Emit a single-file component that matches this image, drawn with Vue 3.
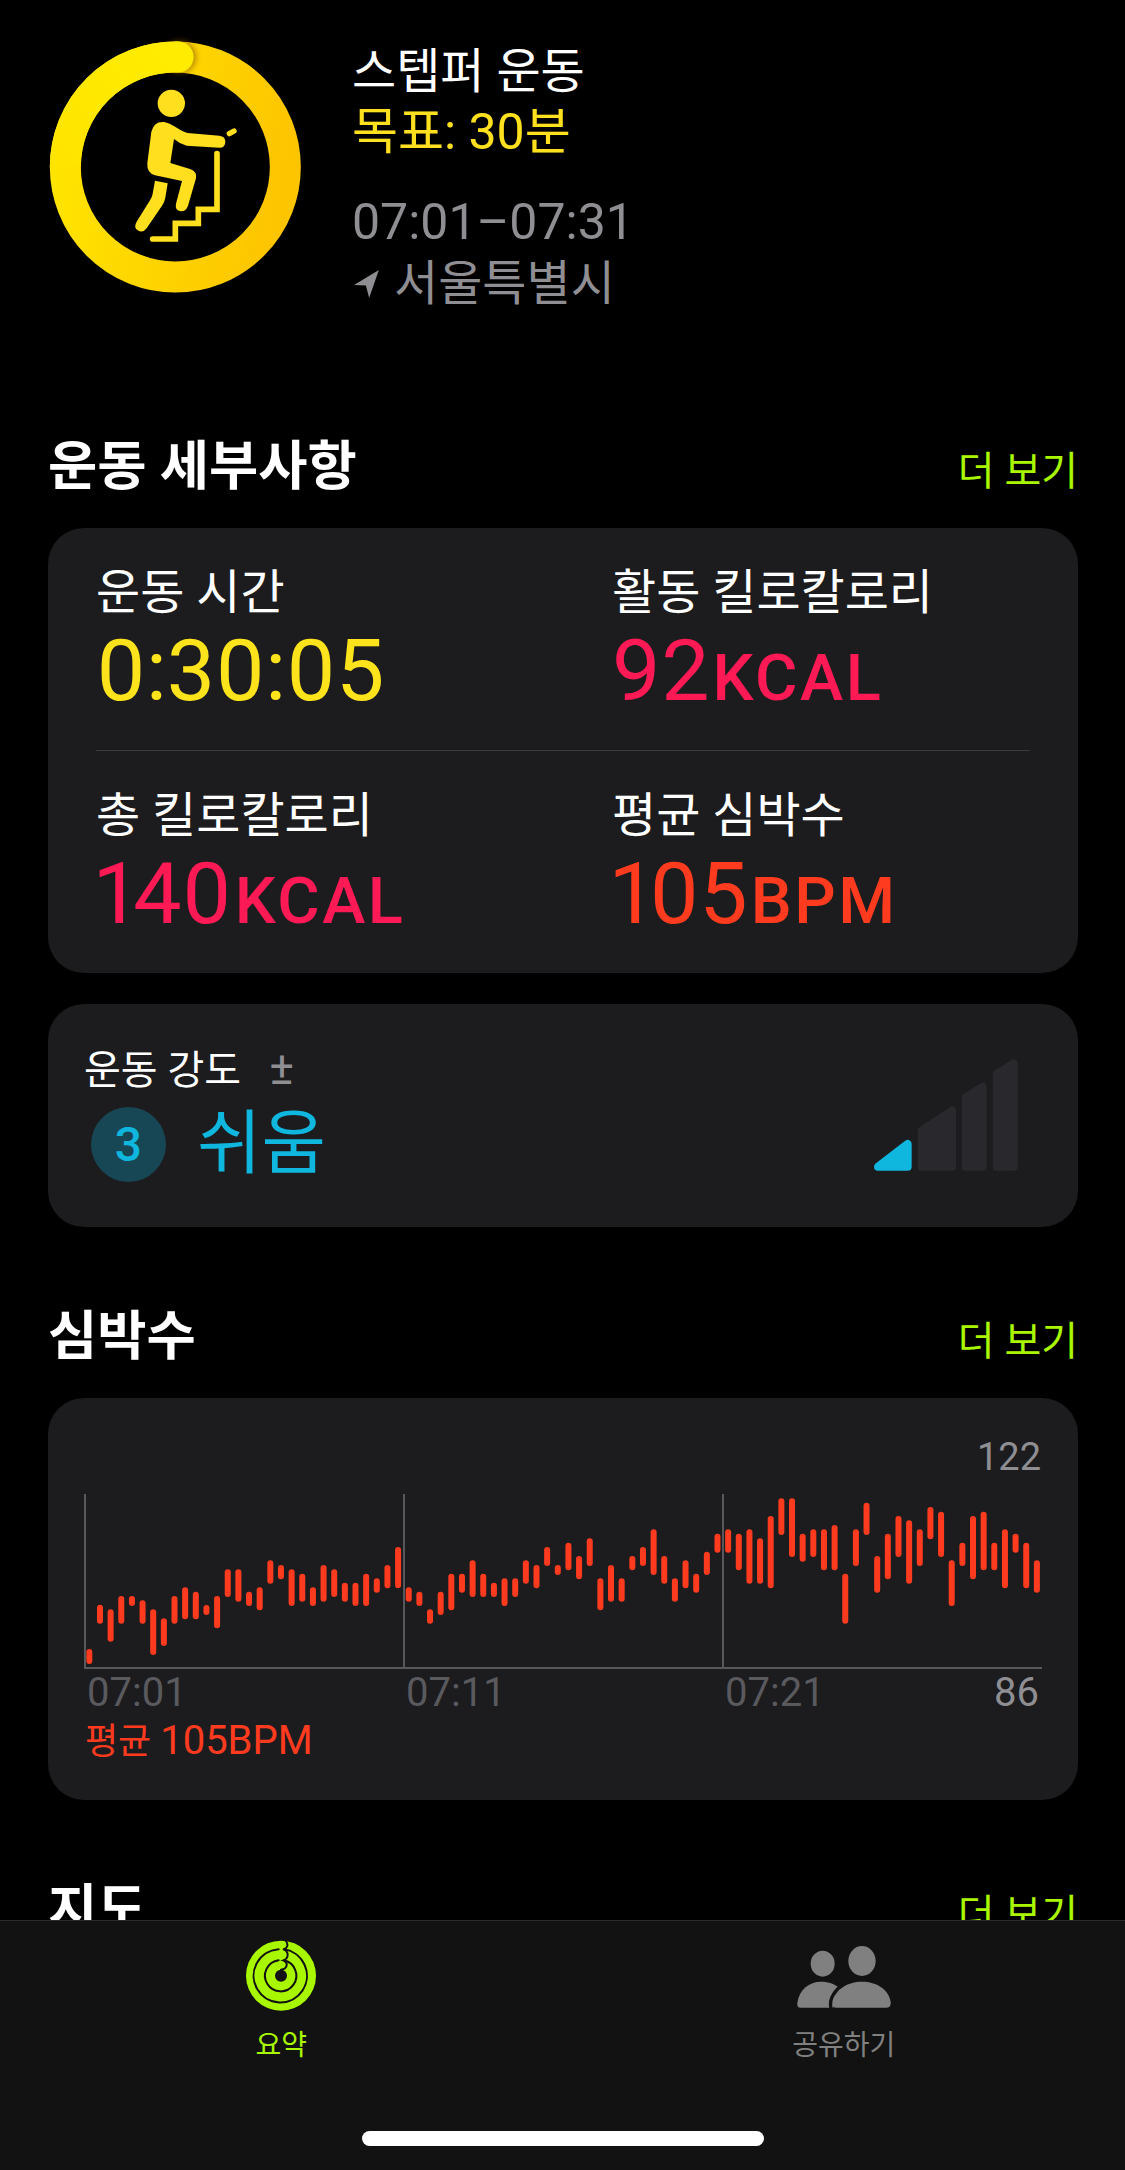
<template>
  <div class="page">
    <!-- workout header -->
    <header class="header">
      <svg class="ring" width="270" height="265" viewBox="0 0 810 795">
        <defs>
          <linearGradient id="ringBase" x1="0" y1="0.3" x2="1" y2="0.5">
            <stop offset="0" stop-color="#ffe400" />
            <stop offset="1" stop-color="#fdc500" />
          </linearGradient>
          <linearGradient id="ringCap" x1="0" y1="1" x2="1" y2="0">
            <stop offset="0" stop-color="#ffe400" />
            <stop offset="1" stop-color="#ffec00" />
          </linearGradient>
          <filter id="capShadow" x="-60%" y="-60%" width="220%" height="220%">
            <feDropShadow dx="6" dy="0" stdDeviation="9" flood-color="#8a5a00" flood-opacity="0.75" />
          </filter>
        </defs>
        <circle cx="406" cy="396" r="330" fill="none" stroke="url(#ringBase)" stroke-width="93" />
        <circle cx="414" cy="66" r="46.500" fill="#ffec00" filter="url(#capShadow)" />
        <path d="M76 396 A330 330 0 0 1 414 66" fill="none" stroke="url(#ringCap)" stroke-width="93" />
        <g fill="#ffdf1e">
          <circle cx="394" cy="205" r="41" />
          <path d="M372 261 C395 265 415 285 442 294 L538 302 Q556 304 556 320 Q556 338 538 338 L440 332 Q418 326 402 312 L391 384 L450 402 Q472 410 468 430 L444 512 Q438 530 422 529 Q404 526 408 506 L426 438 L345 421 Q320 414 322 385 L334 290 Q342 258 372 261 Z" />
          <path d="M345 437 L383 445 L376 488 Q374 500 366 512 L320 580 Q308 596 293 586 Q280 576 290 560 L330 496 Q336 488 338 476 Z" />
        </g>
        <path d="M568 296 L582 288" stroke="#ffdf1e" stroke-width="16" stroke-linecap="round" fill="none" />
        <path d="M531 356 V523 H475 V565 H406 V612 H338" stroke="#ffdf1e" stroke-width="17" stroke-linecap="round" fill="none" />
      </svg>
      <div class="info">
        <div class="line title">스텝퍼 운동</div>
        <div class="line goal">목표: 30분</div>
        <div class="line time">07:01–07:31</div>
        <div class="line place">
          <svg width="26" height="28" viewBox="0 0 24 26"><path d="M23 0 L0 14 L11 14.500 L14 26 Z" fill="#8e8e93" /></svg>
          <span>서울특별시</span>
        </div>
      </div>
    </header>

    <!-- workout details -->
    <section class="section first">
      <div class="sec-head">
        <h2>운동 세부사항</h2>
        <span class="more">더 보기</span>
      </div>
      <div class="card stats">
        <div class="stat-row">
          <div class="stat">
            <div class="label">운동 시간</div>
            <div class="value yellow">0:30:05</div>
          </div>
          <div class="stat">
            <div class="label">활동 킬로칼로리</div>
            <div class="value pink">92<small>KCAL</small></div>
          </div>
        </div>
        <div class="divider"></div>
        <div class="stat-row">
          <div class="stat">
            <div class="label">총 킬로칼로리</div>
            <div class="value pink">140<small>KCAL</small></div>
          </div>
          <div class="stat">
            <div class="label">평균 심박수</div>
            <div class="value red">105<small>BPM</small></div>
          </div>
        </div>
      </div>

      <div class="card effort">
        <div class="effort-left">
          <div class="effort-label">운동 강도<span class="plusminus">±</span></div>
          <div class="effort-row">
            <div class="badge">3</div>
            <div class="effort-text">쉬움</div>
          </div>
        </div>
        <svg class="signal" width="180" height="130" viewBox="0 0 540 390">
          <g stroke-width="24" stroke-linejoin="round">
            <path d="M54 350 L143 282 V350 Z" fill="#0fb6de" stroke="#0fb6de" />
            <path d="M185 350 V242 L276 182 V350 Z" fill="#29292d" stroke="#29292d" />
            <path d="M317 350 V142 L368 110 V350 Z" fill="#29292d" stroke="#29292d" />
            <path d="M410 350 V72 L461 40 V350 Z" fill="#29292d" stroke="#29292d" />
          </g>
        </svg>
      </div>
    </section>

    <!-- heart rate -->
    <section class="section">
      <div class="sec-head">
        <h2>심박수</h2>
        <span class="more">더 보기</span>
      </div>
      <div class="card heart">
        <div class="max">122</div>
        <svg class="chart" width="958" height="176" viewBox="0 0 958 176">
          <g stroke="#58585c" stroke-width="2">
            <line x1="1" y1="0" x2="1" y2="175" />
            <line x1="320" y1="0" x2="320" y2="175" />
            <line x1="639" y1="0" x2="639" y2="175" />
            <line x1="0" y1="174" x2="958" y2="174" />
          </g>
          <rect
            v-for="bar in bars"
            :key="bar.x"
            :x="bar.x - 3"
            :y="bar.y"
            width="6"
            :height="bar.h"
            rx="3"
            fill="#ff3b1f"
          />
        </svg>
        <div class="axis">
          <span class="tick">07:01</span>
          <span class="tick">07:11</span>
          <span class="tick">07:21</span>
          <span class="min">86</span>
        </div>
        <div class="avg">평균 <span>105BPM</span></div>
      </div>
    </section>

    <!-- map, cut off by the tab bar -->
    <section class="section">
      <div class="sec-head">
        <h2>지도</h2>
        <span class="more">더 보기</span>
      </div>
    </section>

    <nav class="tabbar">
      <div class="tab active">
        <div class="tab-icon">
          <svg width="74" height="74" viewBox="46 29 222 222">
            <circle cx="157" cy="142" r="105" fill="#a8f700" />
            <g fill="none" stroke="#121212" stroke-width="6" stroke-linecap="round">
              <path d="M172 38 C180 50 176 60 165 63 A80 80 0 1 1 150 62.500" />
              <path d="M165 63 C182 70 180 90 165 96 A47 47 0 1 1 150 95.500" />
              <path d="M165 96 C180 104 176 122 157 124" />
            </g>
            <circle cx="157" cy="142" r="18" fill="#121212" />
          </svg>
        </div>
        <span>요약</span>
      </div>
      <div class="tab">
        <div class="tab-icon">
          <svg width="120" height="90" viewBox="12 0 360 270">
            <g fill="#808080">
              <ellipse cx="128" cy="101" rx="36" ry="39" />
              <ellipse cx="246" cy="93" rx="41" ry="45" />
              <path d="M62 233 Q50 233 52 218 C58 178 88 155 122 155 C148 155 165 162 180 176 L160 233 Z" />
              <path d="M168 233 Q156 233 158 216 C165 178 202 155 246 155 C290 155 326 178 332 216 Q334 233 320 233 Z" />
            </g>
            <path d="M153 236 Q148 212 160 194 Q170 176 186 166" fill="none" stroke="#121212" stroke-width="10" />
          </svg>
        </div>
        <span>공유하기</span>
      </div>
      <div class="home-bar"></div>
    </nav>
  </div>
</template>

<script setup>
// bar ranges read off the chart, in 3x pixels from the chart's screen position
const ranges = [
  [657, 702], [524, 581], [538, 635], [498, 581], [498, 528], [511, 581], [538, 675], [565, 648], [498, 581], [472, 568],
  [485, 568], [525, 555], [498, 595], [418, 501], [418, 515], [485, 528], [472, 541], [391, 461], [405, 448], [418, 528],
  [431, 515], [472, 528], [405, 515], [418, 501], [458, 515], [458, 528], [431, 528], [445, 488], [405, 475], [351, 475],
  [472, 515], [485, 528], [538, 581], [485, 555], [431, 541], [431, 488], [391, 501], [431, 501], [458, 501], [445, 528],
  [445, 501], [391, 461], [405, 475], [351, 408], [405, 435], [338, 421], [378, 448], [325, 408], [445, 541], [405, 515],
  [445, 515], [378, 421], [351, 408], [298, 435], [378, 461], [445, 515], [391, 475], [431, 488], [365, 435], [311, 368],
  [298, 368], [311, 421], [298, 461], [325, 461], [258, 475], [205, 315], [205, 381], [311, 395], [298, 381], [298, 421],
  [285, 421], [431, 581], [298, 408], [218, 315], [378, 488], [311, 448], [258, 381], [271, 461], [298, 408], [231, 328],
  [245, 381], [391, 528], [338, 408], [258, 448], [245, 421], [338, 421], [298, 475], [311, 368], [338, 475], [391, 488],
]

const bars = ranges.map(([top, bottom], i) => ({
  x: (88 + i * 31.94) / 3 + 60 - 84,
  y: top / 3 + 1430 - 1494,
  h: (bottom - top) / 3,
}))
</script>

<style>
html,
body {
  margin: 0;
  background: #000;
}
</style>

<style scoped>
.page {
  position: relative;
  width: 1125px;
  height: 2170px;
  overflow: hidden;
  background: #000;
  color: #fff;
  font-family: Roboto, "Noto Sans CJK KR", sans-serif;
}

.header {
  display: flex;
  padding: 35px 0 0 40px;
  height: 265px;
}

.info {
  margin-left: 42px;
  padding-top: 6px;
}

.line {
  height: 61px;
  line-height: 61px;
  font-size: 48px;
  white-space: nowrap;
}

.goal {
  color: #ffe01f;
  font-size: 50px;
}

.time {
  margin-top: 29px;
  color: #8e8e93;
  font-size: 50px;
}

.place {
  display: flex;
  align-items: center;
  gap: 14px;
  color: #8e8e93;
}

.place svg {
  margin-left: 2px;
}

.section {
  margin: 0 47px 0 48px;
}

.first {
  margin-top: 129px;
}

.sec-head {
  display: flex;
  justify-content: space-between;
  align-items: flex-start;
  height: 70px;
  margin-top: 72px;
  margin-bottom: 29px;
}

.first .sec-head {
  margin-top: 0;
}

h2 {
  margin: 3px 0 0;
  font-size: 53.500px;
  font-weight: 700;
  line-height: 70px;
}

.more {
  margin-top: 15px;
  color: #a8f700;
  font-size: 40px;
  line-height: 56px;
}

.card {
  background: #1c1c1e;
  border-radius: 36px;
}

.stats {
  padding: 37px 48px 37px;
}

.stat-row {
  display: flex;
}

.stat {
  flex: 0 0 516px;
}

.label {
  height: 56px;
  line-height: 56px;
  font-size: 48px;
  white-space: nowrap;
}

.value {
  margin-top: 8px;
  height: 84px;
  line-height: 84px;
  font-size: 86px;
  font-variant-numeric: proportional-nums;
  white-space: nowrap;
}

.value small {
  font-size: 65px;
  font-weight: 500;
  margin-left: 3px;
  letter-spacing: 2.500px;
}

.yellow {
  color: #fde31b;
}

.pink {
  color: #ff1a55;
}

.red {
  color: #ff3b1f;
}

.divider {
  height: 1px;
  margin: 37px 0;
  background: #3a3a3c;
}

.effort {
  display: flex;
  justify-content: space-between;
  height: 223px;
  margin-top: 31px;
  padding: 40px 38px 0 36px;
  box-sizing: border-box;
}

.effort-label {
  height: 48px;
  line-height: 48px;
  font-size: 40px;
}

.plusminus {
  margin-left: 28px;
  color: #8e8e93;
  font-size: 46px;
}

.effort-row {
  display: flex;
  align-items: center;
  margin: 15px 0 0 7px;
}

.badge {
  width: 75px;
  height: 75px;
  border-radius: 50%;
  background: #174654;
  color: #0fb6de;
  font-size: 48px;
  font-weight: 500;
  line-height: 75px;
  text-align: center;
}

.effort-text {
  margin-left: 31px;
  color: #0fb6de;
  font-size: 70px;
  line-height: 75px;
}

.signal {
  margin-top: 6px;
}

.heart {
  position: relative;
  height: 402px;
  padding: 96px 36px 0 36px;
  box-sizing: border-box;
}

.max {
  position: absolute;
  top: 36px;
  right: 37px;
  color: #8e8e93;
  font-size: 38px;
  line-height: 46px;
}

.chart {
  display: block;
}

.axis {
  display: grid;
  grid-template-columns: 319px 319px 1fr auto;
  height: 46px;
  line-height: 46px;
  font-size: 40px;
}

.tick {
  padding-left: 3px;
  color: #5a5a5e;
}

.min {
  margin-right: 3px;
  color: #8e8e93;
}

.avg {
  margin: 3px 0 0 1px;
  color: #ff3b1f;
  font-size: 36px;
  line-height: 44px;
}

.avg span {
  font-size: 40px;
}

.tabbar {
  position: absolute;
  left: 0;
  right: 0;
  top: 1920px;
  bottom: 0;
  display: flex;
  padding-top: 9px;
  box-sizing: border-box;
  background: #121212;
  border-top: 1px solid #2b2b2d;
}

.tab {
  flex: 1;
  display: flex;
  flex-direction: column;
  align-items: center;
  color: #808080;
  font-size: 28px;
  line-height: 36px;
}

.tab.active {
  color: #a8f700;
}

.tab-icon {
  display: flex;
  align-items: center;
  justify-content: center;
  height: 90px;
  margin-bottom: 8px;
}

.home-bar {
  position: absolute;
  left: 362px;
  top: 210px;
  width: 402px;
  height: 15px;
  border-radius: 8px;
  background: #fff;
}
</style>
